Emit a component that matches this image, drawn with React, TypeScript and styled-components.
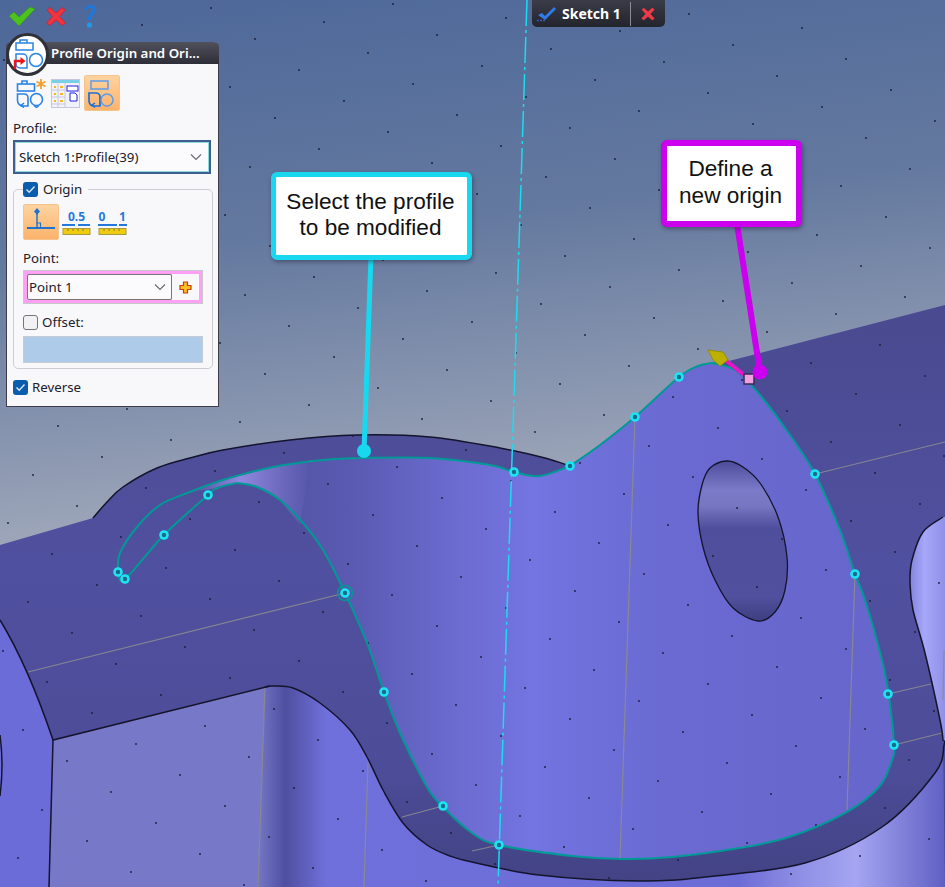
import React from "react";
import styled, { createGlobalStyle } from "styled-components";

type Pt = [number, number];

const segment = (p0: Pt, p1: Pt, p2: Pt, p3: Pt): string => {
  const c1x = p1[0] + (p2[0] - p0[0]) / 6;
  const c1y = p1[1] + (p2[1] - p0[1]) / 6;
  const c2x = p2[0] - (p3[0] - p1[0]) / 6;
  const c2y = p2[1] - (p3[1] - p1[1]) / 6;
  return ` C${c1x.toFixed(1)} ${c1y.toFixed(1)} ${c2x.toFixed(1)} ${c2y.toFixed(1)} ${p2[0]} ${p2[1]}`;
};

const smooth = (pts: Pt[], move = true): string => {
  let d = move ? `M${pts[0][0]} ${pts[0][1]}` : `L${pts[0][0]} ${pts[0][1]}`;
  for (let i = 0; i < pts.length - 1; i++) {
    d += segment(pts[Math.max(i - 1, 0)], pts[i], pts[i + 1], pts[Math.min(i + 2, pts.length - 1)]);
  }
  return d;
};

const smoothClosed = (pts: Pt[]): string => {
  const n = pts.length;
  let d = `M${pts[0][0]} ${pts[0][1]}`;
  for (let i = 0; i < n; i++) {
    d += segment(pts[(i - 1 + n) % n], pts[i], pts[(i + 1) % n], pts[(i + 2) % n]);
  }
  return `${d} Z`;
};

const skyArc: Pt[] = [[93, 518], [107, 502], [123, 487], [157, 468], [190, 458], [223, 450], [290, 440], [357, 435], [430, 437], [500, 448], [545, 458], [570, 466]];
const riseToPeak: Pt[] = [[570, 466], [600, 445], [635, 417], [679, 377], [698, 366], [712, 363], [725, 362]];
const peakToBottom: Pt[] = [[712, 363], [735, 370], [760, 395], [790, 435], [815, 474], [840, 530], [855, 574], [865, 600], [882, 660], [889, 697], [894, 745], [892, 760], [879, 787], [845, 813], [789, 837], [739, 848], [672, 857], [622, 859], [572, 856], [499, 845], [472, 833], [443, 807], [427, 787], [400, 733], [384, 692], [367, 643], [345, 593], [323, 550], [303, 523], [280, 500], [257, 487], [237, 483]];
const topArc: Pt[] = [[118, 572], [120, 553], [137, 527], [160, 505], [190, 492], [223, 480], [273, 467], [323, 460], [363, 458], [430, 458], [490, 465], [514, 472], [540, 476], [570, 466]];
const loopEnd: Pt[] = [[237, 483], [217, 488], [208, 495], [164, 535], [125, 579], [118, 572]];
const faceTop: Pt[] = [[237, 483], [273, 467], [323, 460], [363, 458], [430, 458], [490, 465], [514, 472], [540, 476], [570, 466]];
const lowerEdge: Pt[] = [[265, 687], [273, 686], [293, 688], [320, 703], [350, 730], [367, 757], [383, 790], [403, 823], [427, 845], [450, 856], [472, 862], [539, 875], [639, 881], [705, 877], [805, 863], [882, 827], [935, 773], [944, 745], [943, 740]];
const sideEdge: Pt[] = [[943, 517], [923, 532], [912, 560], [910, 583], [913, 610], [925, 653], [940, 720], [943, 740]];
const holeEdge: Pt[] = [[727, 461], [710, 468], [702, 485], [698, 513], [703, 547], [715, 580], [733, 608], [758, 621], [775, 612], [785, 590], [787, 557], [778, 517], [760, 483], [743, 467]];
const nodes: Pt[] = [[118, 572], [125, 579], [164, 535], [208, 495], [345, 593], [384, 692], [443, 806], [499, 845], [514, 472], [570, 466], [635, 417], [679, 377], [815, 474], [855, 574], [888, 694], [894, 745]];
const seams: [number, number, number, number][] = [
  [28, 672, 345, 593], [815, 474, 945, 442], [888, 694, 931, 684], [894, 745, 942, 733],
  [402, 817, 443, 806], [499, 845, 472, 851], [265, 687, 258, 887], [368, 763, 364, 887],
  [635, 417, 620, 858], [855, 574, 847, 810], [944, 650, 943, 700],
];

const dots: Pt[] = [];
for (let i = -16; i <= 16; i++) {
  for (let j = -24; j <= 24; j++) {
    const x = 141 - 69 * i + 44.3 * j;
    const y = 616 + 17.4 * i + 31 * j;
    if (x > 0 && x < 945 && y > 0 && y < 887) dots.push([Math.round(x), Math.round(y)]);
  }
}

const GlobalStyle = createGlobalStyle`
  html, body { margin: 0; padding: 0; background: #5069a0; }
  * { box-sizing: border-box; }
`;

const Stage = styled.div`
  position: relative;
  width: 945px;
  height: 887px;
  overflow: hidden;
  font-family: "Noto Sans", "Open Sans", sans-serif;
`;

const CadCanvas = styled.svg`
  display: block;
  width: 945px;
  height: 887px;
`;

const TopActions = styled.div`
  position: absolute;
  left: 8px;
  top: 4px;
  display: flex;
  align-items: center;
  gap: 10px;
`;

const ActionIcon = styled.svg<{ $gap?: number }>`
  display: block;
  margin-left: ${(p) => p.$gap ?? 0}px;
`;

const SketchTab = styled.div`
  position: absolute;
  left: 532px;
  top: 0;
  width: 133px;
  height: 27px;
  display: flex;
  align-items: center;
  padding-left: 5px;
  background: linear-gradient(#3a3c48, #23242c);
  border-radius: 0 0 5px 5px;
  color: #fff;
  font-weight: 700;
  font-size: 14px;
`;

const TabLabel = styled.span`
  margin-left: 6px;
  width: 68px;
`;

const TabDivider = styled.span`
  width: 1px;
  height: 24px;
  margin-right: 10px;
  background: #8b8d96;
`;

const Panel = styled.section`
  position: absolute;
  left: 6px;
  top: 42px;
  width: 213px;
  height: 365px;
  display: flex;
  flex-direction: column;
  background: #f8f8fb;
  border: 1px solid #3c3d48;
  border-top: 0;
  border-radius: 5px 5px 0 0;
  color: #20202a;
  font-size: 13.3px;
`;

const TitleBar = styled.header`
  height: 22px;
  margin: 0 -1px;
  padding-left: 45px;
  display: flex;
  align-items: center;
  background: linear-gradient(#50515c, #2d2e38);
  border-radius: 5px 5px 0 0;
  color: #fff;
  font-size: 13.3px;
  font-weight: 600;
  white-space: nowrap;
`;

const BadgeIcon = styled.div`
  position: absolute;
  left: -1px;
  top: -9px;
  width: 43px;
  height: 43px;
  border-radius: 50%;
  background: #fff;
  border: 3px solid #303038;
  display: flex;
  align-items: center;
  justify-content: center;
`;

const Body = styled.div`
  padding: 11px 6px 0 6px;
  display: flex;
  flex-direction: column;
`;

const ModeRow = styled.div`
  display: flex;
  align-items: center;
  gap: 3px;
  padding-left: 3px;
  height: 36px;
`;

const ToolButton = styled.button<{ $active?: boolean; $w?: number }>`
  width: ${(p) => p.$w ?? 32}px;
  height: 36px;
  padding: 0;
  display: flex;
  align-items: center;
  justify-content: center;
  border: ${(p) => (p.$active ? "1px solid #f4c48c" : "0")};
  border-radius: 2px;
  background: ${(p) => (p.$active ? "linear-gradient(#fdd3a0, #fbb36c)" : "transparent")};
`;

const FieldLabel = styled.div<{ $top: number }>`
  margin-top: ${(p) => p.$top}px;
  height: 18px;
  line-height: 18px;
`;

const ProfileSelect = styled.div`
  margin-top: 3px;
  height: 34px;
  width: 198px;
  border: 2px solid #3d5f92;
  padding: 1px;
  background: #8fd8dc;
`;

const SelectInner = styled.div`
  height: 100%;
  display: flex;
  align-items: center;
  justify-content: space-between;
  padding: 0 6px 0 3px;
  background: #fbfbfd;
`;

const Group = styled.fieldset`
  position: relative;
  margin: 15px 0 0 0;
  padding: 14px 9px 0 9px;
  width: 199px;
  height: 180px;
  border: 1px solid #cdcdd2;
  border-radius: 5px;
  display: block;
`;

const GroupLegend = styled.div`
  position: absolute;
  left: 9px;
  top: -10px;
  padding-right: 6px;
  display: flex;
  align-items: center;
  gap: 5px;
  background: #f8f8fb;
`;

const Check = styled.span<{ $on?: boolean }>`
  width: 15px;
  height: 15px;
  flex: none;
  display: flex;
  align-items: center;
  justify-content: center;
  border-radius: 3px;
  background: ${(p) => (p.$on ? "#0a5cad" : "#f2f2f4")};
  border: ${(p) => (p.$on ? "0" : "1.5px solid #74747a")};
`;

const OriginTools = styled.div`
  display: flex;
  align-items: center;
  gap: 3px;
`;

const RulerSlot = styled.span<{ $gap?: number }>`
  display: flex;
  margin-left: ${(p) => p.$gap ?? 0}px;
`;

const PointBox = styled.div`
  margin-top: 3px;
  width: 180px;
  height: 34px;
  display: flex;
  align-items: stretch;
  padding: 3px;
  background: #ffa0f4;
  border: 1px solid #c8c8cc;
`;

const PointSelect = styled.div`
  width: 145px;
  display: flex;
  align-items: center;
  justify-content: space-between;
  padding: 0 5px 0 1px;
  background: #fbfbfd;
  border: 1px solid #77777d;
  border-radius: 2px;
`;

const PlusSlot = styled.div`
  flex: 1;
  display: flex;
  align-items: center;
  justify-content: center;
  background: #f8f8fb;
`;

const CheckRow = styled.div<{ $top: number }>`
  margin-top: ${(p) => p.$top}px;
  height: 16px;
  display: flex;
  align-items: center;
  gap: 4px;
`;

const OffsetField = styled.div`
  margin-top: 6px;
  width: 180px;
  height: 27px;
  background: #aecbe9;
  border: 1px solid #c6ccd4;
`;

const Callout = styled.div<{ $left: number; $top: number; $w: number; $h: number; $color: string; $border: number }>`
  position: absolute;
  left: ${(p) => p.$left}px;
  top: ${(p) => p.$top}px;
  width: ${(p) => p.$w}px;
  height: ${(p) => p.$h}px;
  padding-bottom: 2px;
  padding-right: 2px;
  display: flex;
  align-items: center;
  justify-content: center;
  text-align: center;
  background: #fff;
  border: ${(p) => p.$border}px solid ${(p) => p.$color};
  border-radius: 6px;
  box-shadow: 1px 2px 4px rgba(30, 30, 50, 0.45);
  color: #111;
  font-family: "Liberation Sans", Arial, sans-serif;
  font-size: 22.6px;
  line-height: 26.5px;
`;

const Chevron = () => (
  <svg width="12" height="8" viewBox="0 0 12 8"><path d="M1 1.5 6 6.5 11 1.5" fill="none" stroke="#6a6a70" strokeWidth="1.2" /></svg>
);

const Tick = () => (
  <svg width="11" height="9" viewBox="0 0 11 9"><path d="M1.5 4.5 4.2 7.2 9.5 1.5" fill="none" stroke="#d8e8f8" strokeWidth="1.4" /></svg>
);

const NewProfileIcon = () => (
  <svg width="30" height="30" viewBox="0 0 30 30" fill="none" stroke="#2a84e6" strokeWidth="1.6">
    <rect x="1.5" y="6" width="17" height="7" />
    <path d="M6 6V3h5v3" />
    <path d="M1.5 16h7a3.5 3.5 0 0 1 3.5 3.5V28H7a5.5 5.5 0 0 1-5.5-5.5z" />
    <circle cx="20.5" cy="21.5" r="6" />
    <path d="M8 25l-3 2.5 3 2M18 27.5l2.5 2 2.5-2" />
    <path d="M25 1v10M20.5 3.5l9 5M29.5 3.5l-9 5" stroke="#f4a030" strokeWidth="1.8" />
  </svg>
);

const TableIcon = () => (
  <svg width="29" height="29" viewBox="0 0 29 29">
    <rect x="0.5" y="0.5" width="28" height="28" fill="#f2f2fa" stroke="#c6c6dc" />
    <rect x="1" y="1" width="27" height="3" fill="#78cfe6" />
    <path d="M7 4v24M14 4v24M1 11h13M1 18h13M1 25h13" stroke="#c8c8dc" fill="none" />
    <path d="M9 8h3M9 15h3M9 22h3M3 8h2M3 15h2M3 22h2" stroke="#f2b820" strokeWidth="2" />
    <rect x="16" y="7" width="11" height="5" fill="#fff" stroke="#2222dd" />
    <path d="M19 14h5l2 2v6h-7z" fill="#fff" stroke="#2222dd" />
  </svg>
);

const ActiveProfileIcon = () => (
  <svg width="30" height="32" viewBox="0 0 30 32" fill="none" stroke="#5c9cec" strokeWidth="1.5">
    <rect x="4" y="4" width="17" height="8" />
    <path d="M2 16h7a4 4 0 0 1 4 4v9H7a5 5 0 0 1-5-5z" stroke="#1a70d8" strokeWidth="1.7" />
    <circle cx="20" cy="23" r="6" />
    <path d="M8 26l-3 2 3 2.5" stroke="#1a70d8" />
  </svg>
);

const OriginIcon = () => (
  <svg width="32" height="32" viewBox="0 0 32 32" fill="none" stroke="#1f74d2" strokeWidth="1.5">
    <path d="M2 22h28" strokeWidth="2" />
    <path d="M12 8v14" />
    <path d="M12 2l3 3.5L12 9 9 5.5z" fill="#1f74d2" stroke="none" />
    <path d="M12 17h3.5v5" strokeWidth="1.2" />
  </svg>
);

const RulerIcon = ({ left, right }: { left: string; right?: string }) => (
  <svg width="30" height="30" viewBox="0 0 30 30">
    <text x={right ? 0.5 : 6} y="14" fontFamily="Noto Sans, sans-serif" fontSize="12" fontWeight="700" fill="#2478dc">{left}</text>
    {right && <text x="21" y="14" fontFamily="Noto Sans, sans-serif" fontSize="12" fontWeight="700" fill="#2478dc">{right}</text>}
    <path d={right ? "M0 18h19M21 18h8" : "M0 18h13M16 18h12"} stroke="#2478dc" strokeWidth="2" />
    <rect x="1" y="21.5" width="27" height="6" fill="#f0cc10" stroke="#a89a40" />
    <path d="M6 22v2M11 22v2M16 22v2M21 22v2" stroke="#8a7a20" />
  </svg>
);

const Canvas = () => (
  <CadCanvas viewBox="0 0 945 887">
    <defs>
      <linearGradient id="sky" x1="0" y1="0" x2="0.12" y2="1" gradientUnits="objectBoundingBox">
        <stop offset="0" stopColor="#4c6799" />
        <stop offset="0.3" stopColor="#64799f" />
        <stop offset="0.62" stopColor="#a0a8ba" />
      </linearGradient>
      <linearGradient id="flange" x1="0" y1="0" x2="0" y2="1">
        <stop offset="0" stopColor="#4a4a90" />
        <stop offset="0.45" stopColor="#5050a0" />
        <stop offset="0.8" stopColor="#4c4c98" />
        <stop offset="1" stopColor="#424284" />
      </linearGradient>
      <linearGradient id="face" gradientUnits="userSpaceOnUse" x1="240" y1="0" x2="860" y2="0">
        <stop offset="0" stopColor="#4f4f9e" />
        <stop offset="0.18" stopColor="#5a5ab2" />
        <stop offset="0.35" stopColor="#6b6bd0" />
        <stop offset="0.47" stopColor="#7474e2" />
        <stop offset="0.68" stopColor="#6a6ad2" />
        <stop offset="1" stopColor="#6666cc" />
      </linearGradient>
      <linearGradient id="lower" gradientUnits="userSpaceOnUse" x1="258" y1="0" x2="945" y2="0">
        <stop offset="0" stopColor="#7676c6" />
        <stop offset="0.04" stopColor="#4f4fa0" />
        <stop offset="0.1" stopColor="#7070dc" />
        <stop offset="0.7" stopColor="#6c6cd6" />
        <stop offset="0.78" stopColor="#8c8ce4" />
        <stop offset="0.87" stopColor="#a5a5f2" />
        <stop offset="1" stopColor="#6060c4" />
      </linearGradient>
      <linearGradient id="side" gradientUnits="userSpaceOnUse" x1="908" y1="0" x2="945" y2="0">
        <stop offset="0" stopColor="#8080d8" />
        <stop offset="0.45" stopColor="#a6a6fa" />
        <stop offset="1" stopColor="#9090e8" />
      </linearGradient>
      <linearGradient id="hole" gradientUnits="userSpaceOnUse" x1="0" y1="461" x2="0" y2="621">
        <stop offset="0" stopColor="#4c4c9a" />
        <stop offset="0.18" stopColor="#7a7ac8" />
        <stop offset="0.28" stopColor="#7676c2" />
        <stop offset="0.42" stopColor="#4e4e9c" />
        <stop offset="0.85" stopColor="#50509e" />
        <stop offset="1" stopColor="#3e3e80" />
      </linearGradient>
      <linearGradient id="sliver" gradientUnits="userSpaceOnUse" x1="190" y1="0" x2="310" y2="0">
        <stop offset="0" stopColor="#9088e0" stopOpacity="0" />
        <stop offset="0.42" stopColor="#9088e0" />
        <stop offset="1" stopColor="#9088e0" stopOpacity="0" />
      </linearGradient>
    </defs>

    <rect width="945" height="887" fill="url(#sky)" />

    <path
      d={`M0 887 L0 545 L93 518 ${smooth(skyArc, false)} ${smooth(riseToPeak, false)} L945 305 L945 887 Z`}
      fill="url(#flange)"
    />
    <path d="M0 620 Q28 666 53 740 L49 887 L0 887 Z" fill="#6c6cd8" />
    <path d="M53 740 L265 687 L258 887 L49 887 Z" fill="#7878c8" />
    <path d={`${smooth(lowerEdge)} L945 887 L258 887 Z`} fill="url(#lower)" />
    <path d={`${smooth(sideEdge)} L945 745 L945 517 Z`} fill="url(#side)" />

    <path d={`${smooth(faceTop)} ${smooth(riseToPeak.slice(0, 6), false)} ${smooth(peakToBottom, false)} Z`} fill="url(#face)" />
    <path d="M190 492 L223 480 L273 467 L310 461 L300 525 L280 500 L257 487 L237 483 L217 488 Z" fill="url(#sliver)" />

    <path d={smoothClosed(holeEdge)} fill="url(#hole)" stroke="#14142c" strokeWidth="1.3" />

    {seams.map(([x1, y1, x2, y2], i) => (
      <line key={i} x1={x1} y1={y1} x2={x2} y2={y2} stroke="#8c8c90" strokeWidth="1.2" opacity="0.9" />
    ))}

    <g fill="none" stroke="#14142c" strokeWidth="1.5">
      <path d={smooth(skyArc)} />
      <path d="M0 620 Q28 666 53 740 L270 686" />
      <path d="M53 740 L49 887" />
      <path d={smooth(lowerEdge)} />
      <path d={smooth(sideEdge)} />
      <path d="M0 735 Q4 765 0 796" />
    </g>

    {dots.map(([x, y], i) => (
      <circle key={i} cx={x} cy={y} r="0.9" fill="#1c1c36" />
    ))}

    <g fill="none" stroke="#009a96" strokeWidth="2">
      <path d={smooth(topArc)} />
      <path d={smooth(riseToPeak)} />
      <path d={smooth(peakToBottom)} />
      <path d={smooth(loopEnd)} />
      <circle cx="345" cy="593" r="7.5" strokeWidth="1.5" />
    </g>

    <path d="M527 0 L498 887" stroke="#1bdcf0" strokeWidth="1.5" strokeDasharray="26 4 3 4" fill="none" />

    {nodes.map(([x, y], i) => (
      <circle key={i} cx={x} cy={y} r="3.5" fill="#1a6a88" stroke="#1ce4f2" strokeWidth="2.6" />
    ))}

    <path d="M749 379 L724 359" stroke="#e814c8" strokeWidth="4" />
    <path d="M708 350 L723 352 L728 360 L720 366 L713 360 Z" fill="#bdb000" stroke="#8f8600" strokeWidth="0.8" />
    <rect x="744" y="374" width="10" height="10" fill="#f0a0e0" stroke="#3a2a5a" strokeWidth="1.5" />

    <g strokeLinecap="round">
      <path d="M371 256 L364 451" stroke="#18d8f0" strokeWidth="5" />
      <circle cx="364" cy="451" r="7" fill="#18d8f0" />
      <path d="M737 224 L760 372" stroke="#cc00ee" strokeWidth="6" />
      <circle cx="760" cy="372" r="7.5" fill="#cc00ee" />
    </g>
  </CadCanvas>
);

export default function App() {
  return (
    <Stage>
      <GlobalStyle />
      <Canvas />

      <TopActions>
        <ActionIcon width="27" height="20" viewBox="0 0 27 20">
          <path d="M1 10 L6 6 L11 11 L22 1 L27 3 L11 20 Z" fill="#4cc31c" stroke="#2f9a10" strokeWidth="0.6" />
        </ActionIcon>
        <ActionIcon width="20" height="19" viewBox="0 0 20 19" $gap={1}>
          <path d="M1 3 L4 0.5 L10 6 L16 0.5 L19.5 3 L13.5 9.5 L19.5 16 L16 18.5 L10 13 L4 18.5 L0.5 16 L6.5 9.5 Z" fill="#ef3340" stroke="#c81826" strokeWidth="0.6" />
        </ActionIcon>
        <ActionIcon width="14" height="24" viewBox="0 0 14 24" $gap={7}>
          <path d="M1.5 6 C2 2 5 1 7.5 1 C11 1 13 3 13 6 C13 9 10.5 10 9 11.5 C8 12.5 8 14 8 16 L5 16 C5 13 5 11 7 9.5 C8.5 8.3 9.5 7.5 9.5 6 C9.5 4.5 8.5 3.6 7 3.6 C5.5 3.6 4.8 4.8 4.7 6.2 Z" fill="#1e78dc" />
          <circle cx="6.5" cy="21" r="2.6" fill="#1e9ae8" />
        </ActionIcon>
      </TopActions>

      <SketchTab>
        <svg width="19" height="16" viewBox="0 0 19 16">
          <path d="M1 9 L5 7 L8 10 L17 1 L19 3 L8 14 Z" fill="#2e7ce8" />
          <path d="M0 14.5h9" stroke="#2e5cc8" strokeWidth="1.5" strokeDasharray="2 1" />
        </svg>
        <TabLabel>Sketch 1</TabLabel>
        <TabDivider />
        <svg width="14" height="14" viewBox="0 0 20 19">
          <path d="M1 3 L4 0.5 L10 6 L16 0.5 L19.5 3 L13.5 9.5 L19.5 16 L16 18.5 L10 13 L4 18.5 L0.5 16 L6.5 9.5 Z" fill="#f03a48" />
        </svg>
      </SketchTab>

      <Panel>
        <TitleBar>Profile Origin and Ori...</TitleBar>
        <BadgeIcon>
          <svg width="34" height="34" viewBox="0 0 34 34" fill="none" stroke="#2a84e6" strokeWidth="1.5">
            <rect x="5" y="5" width="17" height="7" />
            <path d="M9 5V2h7v3" />
            <path d="M5 16h7a4 4 0 0 1 4 4v10H9a4 4 0 0 1-4-4z" />
            <circle cx="25" cy="22" r="6.5" />
            <path d="M4 31v-8h6" stroke="#e81818" strokeWidth="2.4" />
            <path d="M9.5 19l5 4-5 4z" fill="#e81818" stroke="none" />
          </svg>
        </BadgeIcon>
        <Body>
          <ModeRow>
            <ToolButton $w={30}><NewProfileIcon /></ToolButton>
            <ToolButton $w={32}><TableIcon /></ToolButton>
            <ToolButton $w={36} $active><ActiveProfileIcon /></ToolButton>
          </ModeRow>
          <FieldLabel $top={8}>Profile:</FieldLabel>
          <ProfileSelect>
            <SelectInner>
              <span>Sketch 1:Profile(39)</span>
              <Chevron />
            </SelectInner>
          </ProfileSelect>
          <Group>
            <GroupLegend>
              <Check $on><Tick /></Check>
              <span>Origin</span>
            </GroupLegend>
            <OriginTools>
              <ToolButton $w={36} $active><OriginIcon /></ToolButton>
              <RulerSlot><RulerIcon left="0.5" /></RulerSlot>
              <RulerSlot $gap={3}><RulerIcon left="0" right="1" /></RulerSlot>
            </OriginTools>
            <FieldLabel $top={9}>Point:</FieldLabel>
            <PointBox>
              <PointSelect>
                <span>Point 1</span>
                <Chevron />
              </PointSelect>
              <PlusSlot>
                <svg width="13" height="13" viewBox="0 0 13 13">
                  <path d="M4.5 1h4v3.5H12v4H8.5V12h-4V8.5H1v-4h3.5z" fill="#f8c020" stroke="#c83c10" strokeWidth="1.2" />
                </svg>
              </PlusSlot>
            </PointBox>
            <CheckRow $top={10}>
              <Check />
              <span>Offset:</span>
            </CheckRow>
            <OffsetField />
          </Group>
          <CheckRow $top={10}>
            <Check $on><Tick /></Check>
            <span>Reverse</span>
          </CheckRow>
        </Body>
      </Panel>

      <Callout $left={271} $top={172} $w={201} $h={88} $color="#18d8f0" $border={5}>
        Select the profile<br />to be modified
      </Callout>
      <Callout $left={661} $top={140} $w={141} $h={87} $color="#cc00ee" $border={6}>
        Define a<br />new origin
      </Callout>
    </Stage>
  );
}
